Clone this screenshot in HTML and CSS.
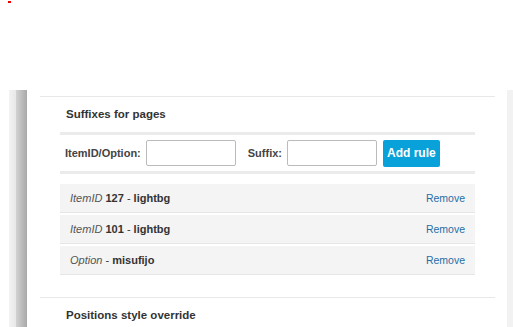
FILE: index.html
```html
<!DOCTYPE html>
<html lang="en">
<head>
    <meta charset="UTF-8">
    <meta name="viewport" content="width=device-width, initial-scale=1.0">
    <title>Suffixes</title>
    <link rel="stylesheet" href="styles.css">
</head>
<body>
    <div class="topbar"><span class="mark"></span></div>

    <div class="layout">
        <div class="sidebar"></div>

        <div class="main">
            <div class="section">
                <h3>Suffixes for pages</h3>
                <div class="rule-form">
                    <label>ItemID/Option:</label>
                    <input type="text" class="item-input">
                    <label class="suffix-label">Suffix:</label>
                    <input type="text" class="suffix-input">
                    <button class="add-btn">Add rule</button>
                </div>

                <div class="rules">
                    <div class="rule">
                        <span><i>ItemID</i> <b>127</b> - <b>lightbg</b></span>
                        <a href="#">Remove</a>
                    </div>
                    <div class="rule">
                        <span><i>ItemID</i> <b>101</b> - <b>lightbg</b></span>
                        <a href="#">Remove</a>
                    </div>
                    <div class="rule">
                        <span><i>Option</i> - <b>misufijo</b></span>
                        <a href="#">Remove</a>
                    </div>
                </div>
            </div>

            <div class="section last">
                <h3>Positions style override</h3>
            </div>
        </div>

        <div class="rightstrip"></div>
    </div>
</body>
</html>
```

FILE: styles.css
```css
body {
    margin: 0;
    font-family: "Liberation Sans", Arial, sans-serif;
    font-size: 11px;
    color: #333;
    background: #fff;
    overflow: hidden;
}
.topbar {
    height: 90px;
    padding: 1px 0 0 8px;
    box-sizing: border-box;
}
.mark {
    display: inline-block;
    width: 3px;
    height: 2px;
    background: #e00;
    vertical-align: top;
}
.layout {
    display: flex;
    height: 237px;
}
.sidebar {
    width: 18px;
    margin-left: 9px;
    background: linear-gradient(to right, #f3f3f3 0, #e8e8e8 7px, #d2d2d2 7px, #a9a9a9 18px);
}
.main {
    flex: 1;
    padding: 6px 12px 0 13px;
}
.rightstrip {
    width: 6px;
    background: #f2f2f2;
}
.section {
    border-top: 1px solid #e8e8e8;
    padding: 0 20px 20px;
}
.section h3 {
    margin: 0;
    padding-left: 6px;
    font-size: 11.5px;
    line-height: 35px;
    color: #333;
}
.rule-form {
    display: flex;
    align-items: center;
    height: 36px;
    padding: 0 5px;
    border-top: 3px solid #ebebeb;
    border-bottom: 3px solid #ebebeb;
}
.rule-form label {
    font-weight: bold;
    color: #444;
}
.rule-form input {
    box-sizing: border-box;
    width: 90px;
    height: 26px;
    margin-left: 5px;
    border: 1px solid #bbb;
    border-radius: 2px;
}
.suffix-label {
    margin-left: 12px;
}
.add-btn {
    margin-left: 6px;
    height: 27px;
    padding: 0 4px;
    border: none;
    border-radius: 2px;
    background-color: #08a1d9;
    color: white;
    font-family: inherit;
    font-size: 12px;
    font-weight: bold;
}
.rules {
    margin-top: 10px;
}
.rule {
    display: flex;
    justify-content: space-between;
    align-items: center;
    height: 28px;
    padding: 0 10px;
    margin-bottom: 2px;
    background: #f4f4f4;
    border-bottom: 1px solid #e6e6e6;
    color: #333;
}
.rule i {
    color: #555;
}
.rule a {
    font-size: 10.5px;
    color: #1f6ea6;
    text-decoration: none;
}
```
